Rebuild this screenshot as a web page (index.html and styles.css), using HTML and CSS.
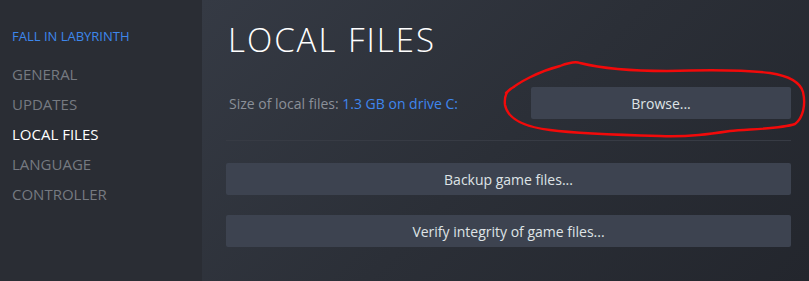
FILE: index.html
```html
<!DOCTYPE html>
<html lang="en">
<head>
  <meta charset="UTF-8" />
  <title>Properties - Local Files</title>
  <link rel="stylesheet" href="styles.css">
</head>
<body>

  <div class="window">
    <nav class="sidebar">
      <div class="game-title">FALL IN LABYRINTH</div>
      <ul class="nav-list">
        <li>GENERAL</li>
        <li>UPDATES</li>
        <li class="active">LOCAL FILES</li>
        <li>LANGUAGE</li>
        <li>CONTROLLER</li>
      </ul>
    </nav>

    <main class="content">
      <h1>LOCAL FILES</h1>

      <div class="size-row">
        <span class="size-label">Size of local files: <span class="size-value">1.3 GB on drive C:</span></span>
        <button class="btn browse-btn">Browse...</button>
      </div>

      <div class="actions">
        <button class="btn">Backup game files...</button>
        <button class="btn">Verify integrity of game files...</button>
      </div>
    </main>
  </div>

  <!-- hand drawn marker around the browse button -->
  <svg class="scribble" width="809" height="281" viewBox="0 0 809 281">
    <path d="M506 93 C 518 82, 540 71, 560 66 C 568 63, 575 61, 580 63 C 600 68, 630 71, 667 71 C 700 70, 740 69, 770 73 C 790 76, 800 82, 803 92 C 806 105, 803 118, 795 124 C 780 129, 750 129, 730 131 C 710 134, 690 137, 660 136 C 620 135, 580 134, 550 130 C 525 127, 508 120, 505 105 C 504 96, 506 90, 514 87"
      fill="none" stroke="#f20a0a" stroke-width="2.4" stroke-linecap="round" />
  </svg>

</body>
</html>
```

FILE: styles.css
```css
body {
  margin: 0;
  background: #23262d;
  font-family: 'Open Sans', 'Liberation Sans', sans-serif;
}

.window {
  display: flex;
  width: 809px;
  height: 281px;
  overflow: hidden;
}

.sidebar {
  width: 202px;
  flex-shrink: 0;
  background: #2a2d34;
  padding: 27px 0 0 12px;
  box-sizing: border-box;
}

.game-title {
  color: #3d87ec;
  font-size: 13px;
  line-height: 18px;
  margin-bottom: 14px;
}

.nav-list {
  list-style: none;
  margin: 0;
  padding: 0;
}

.nav-list li {
  color: #767a81;
  font-size: 15px;
  line-height: 30px;
}

.nav-list li.active {
  color: #fff;
}

.content {
  flex: 1;
  padding: 18px 18px 0 24px;
  background: linear-gradient(135deg, #353a44 0%, #2b2f37 50%, #23262d 100%);
}

h1 {
  margin: 0 0 0 2px;
  font-weight: 300;
  font-size: 33px;
  line-height: 44px;
  letter-spacing: 2px;
  color: #fff;
}

.size-row {
  display: flex;
  justify-content: space-between;
  align-items: center;
  margin-top: 25px;
  padding: 0 0 21px 3px;
  border-bottom: 1px solid #373b44;
}

.size-label {
  color: #8b9099;
  font-size: 14px;
}

.size-value {
  color: #3f86ee;
}

.btn {
  display: block;
  height: 32px;
  border: none;
  border-radius: 2px;
  background: #3d4350;
  color: #dfe3e6;
  font-family: 'Open Sans', 'Liberation Sans', sans-serif;
  font-size: 14px;
  cursor: pointer;
}

.browse-btn {
  width: 260px;
}

.actions {
  display: flex;
  flex-direction: column;
  gap: 20px;
  margin-top: 22px;
}

.actions .btn {
  width: 100%;
}

.scribble {
  position: absolute;
  left: 0;
  top: 0;
  pointer-events: none;
}
```
